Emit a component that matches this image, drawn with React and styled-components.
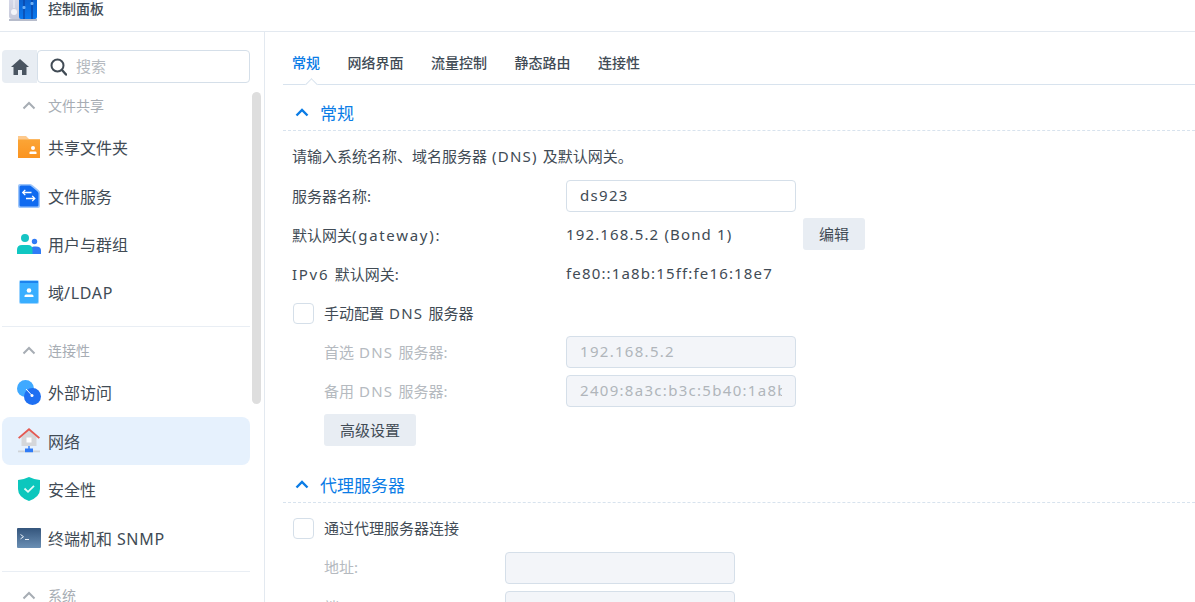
import React from "react";
import styled, { createGlobalStyle } from "styled-components";

const GlobalStyle = createGlobalStyle`
  html, body { margin: 0; padding: 0; background: #fff; }
  body {
    font-family: "Noto Sans", "Noto Sans CJK SC", sans-serif;
    color: #414b55;
  }
  * { box-sizing: border-box; }
`;

const Chevron = ({ color = "#a7adb4", width = 2 }) => (
  <svg width="14" height="9" viewBox="0 0 14 9">
    <path d="M1.500 7.500 7 2l5.500 5.500" fill="none" stroke={color} strokeWidth={width} />
  </svg>
);

const AppIcon = () => (
  <svg width="28" height="21" viewBox="0 0 28 21">
    <defs>
      <linearGradient id="appSteel" x1="0" y1="0" x2="0" y2="1">
        <stop offset="0" stopColor="#d9dcec" />
        <stop offset="1" stopColor="#c6c9da" />
      </linearGradient>
      <linearGradient id="appBlue" x1="0" y1="0" x2="0" y2="1">
        <stop offset="0" stopColor="#0c5cc8" />
        <stop offset="1" stopColor="#0a78ee" />
      </linearGradient>
    </defs>
    <rect x="0" y="-6" width="28" height="25" rx="3" fill="url(#appSteel)" />
    <rect x="10" y="-6" width="18" height="25" rx="2" fill="url(#appBlue)" />
    <rect x="0" y="19" width="28" height="2" fill="#b7bccb" />
    <circle cx="5" cy="12" r="3" fill="#f4f5f9" />
    <path d="M5 0v8" stroke="#eef0f7" strokeWidth="1.200" />
    <path d="M15 0v19M23 0v19" stroke="#0a3f9e" strokeWidth="1.200" />
    <rect x="13.500" y="6" width="3" height="3" rx="1" fill="#6fb0f5" />
    <rect x="21.500" y="2" width="3" height="3" rx="1" fill="#6fb0f5" />
  </svg>
);

const HomeIcon = () => (
  <svg width="18" height="16" viewBox="0 0 18 16">
    <path d="M9 0 0 8h2.500v8h4.500v-5h4v5h4.500V8H18z" fill="#4a5561" />
  </svg>
);

const SearchIcon = () => (
  <svg width="17" height="18" viewBox="0 0 17 18">
    <circle cx="7.500" cy="7.500" r="6" fill="none" stroke="#414b55" strokeWidth="2" />
    <path d="m12 12 4 4.500" stroke="#414b55" strokeWidth="2.400" strokeLinecap="round" />
  </svg>
);

const FolderIcon = () => (
  <svg width="24" height="22" viewBox="0 0 24 22">
    <defs>
      <linearGradient id="folderFill" x1="0" y1="0" x2="0" y2="1">
        <stop offset="0" stopColor="#fba536" />
        <stop offset="1" stopColor="#fb9420" />
      </linearGradient>
    </defs>
    <path d="M1 0h8l3 3h11v5H1z" fill="#fdc98c" />
    <path d="M1 3.500h22V22H1z" fill="url(#folderFill)" />
    <circle cx="16" cy="12" r="2" fill="#fff" />
    <path d="M12.500 18v-1.500q0-1 1-1h5q1 0 1 1V18z" fill="#fff" />
  </svg>
);

const FileServiceIcon = () => (
  <svg width="22" height="24" viewBox="0 0 22 24">
    <path d="M2 0h10q1.500 0 3 1.500l5.500 4.500q1.500 1 1.500 3v13q0 2-2 2H2q-2 0-2-2V2q0-2 2-2z" fill="#9cc5fb" />
    <path d="M3 1.500h8.500q1 0 2 1l5.500 4.500q1.500 1 1.500 2.500V21q0 1.500-1.500 1.500H3Q1.500 22.500 1.500 21V3Q1.500 1.500 3 1.500z" fill="#0f6af0" />
    <path d="M13.500 8.500h-9m2.800-2.600L4.700 8.500l2.600 2.600M8 14.500h9m-2.800-2.600 2.600 2.600-2.600 2.600" fill="none" stroke="#fff" strokeWidth="1.300" />
  </svg>
);

const UsersIcon = () => (
  <svg width="24" height="20" viewBox="0 0 24 20">
    <path d="M14 20v-3.500q0-4 3-4h2q5 0 5 4V20z" fill="#2f7bf6" />
    <circle cx="17.500" cy="7.500" r="2.700" fill="#2f7bf6" />
    <circle cx="8" cy="4" r="4" fill="#16c4c4" />
    <path d="M0 20v-4q0-5 5-5h6q4.500 0 4.500 5v4z" fill="#10c7c2" />
  </svg>
);

const DomainIcon = () => (
  <svg width="20" height="24" viewBox="0 0 20 24">
    <rect width="20" height="24" rx="2" fill="#9cd4ff" />
    <path d="M1 3h18v19q0 1-1 1H2q-1 0-1-1z" fill="#39aeff" />
    <path d="M1 1h18v2H1z" fill="#1c83ee" />
    <circle cx="10" cy="10.500" r="2.300" fill="#fff" />
    <path d="M5.500 17v-1q0-1.500 1.500-1.500h6q1.500 0 1.500 1.500v1z" fill="#fff" />
  </svg>
);

const ExternalIcon = () => (
  <svg width="24" height="25" viewBox="0 0 24 25">
    <circle cx="8.500" cy="8.500" r="8.500" fill="#3fa9ff" />
    <circle cx="15.500" cy="16.500" r="8.500" fill="#1e6ff2" />
    <path d="m9 9 6.500 7" stroke="#fff" strokeWidth="1" />
    <circle cx="15" cy="15.500" r="1.500" fill="#fff" />
  </svg>
);

const NetworkIcon = () => (
  <svg width="22" height="25" viewBox="0 0 22 25">
    <path d="M11 2 3.500 9v9h15V9z" fill="#d5d7da" />
    <path d="M0 9.500 11 0l11 9.500-1.300 1.300L11 2.500 1.300 10.800z" fill="#e45a52" />
    <rect x="8.500" y="9.500" width="5" height="5" fill="#fff" />
    <path d="M0 22.500h22v1.800H0z" fill="#cfd3d8" />
    <path d="M10.300 18h1.400v2.500H15v3.800H7v-3.800h3.300z" fill="#2f7bf6" />
  </svg>
);

const ShieldIcon = () => (
  <svg width="22" height="24" viewBox="0 0 22 24">
    <path d="M11 0q5 2.500 11 3v9q0 8-11 12Q0 20 0 12V3q6-.5 11-3z" fill="#0cc7bd" />
    <path d="m6.500 11.500 3.500 3.300 6-6" fill="none" stroke="#e4fbf8" strokeWidth="1.800" />
  </svg>
);

const TerminalIcon = () => (
  <svg width="24" height="20" viewBox="0 0 24 20">
    <defs>
      <linearGradient id="termBg" x1="0" y1="0" x2="0" y2="1">
        <stop offset="0" stopColor="#34557c" />
        <stop offset="1" stopColor="#6a8fb4" />
      </linearGradient>
    </defs>
    <rect width="24" height="20" rx="1" fill="url(#termBg)" />
    <path d="m3.500 6.500 3 2.200-3 2.200M8 11.500h4" fill="none" stroke="#e8eef5" strokeWidth="1" />
  </svg>
);

const Latin = styled.span`
  letter-spacing: ${(p) => p.$spacing || "1.200px"};
`;

const sideGroups = [
  {
    title: "文件共享",
    items: [
      { label: "共享文件夹", icon: <FolderIcon /> },
      { label: "文件服务", icon: <FileServiceIcon /> },
      { label: "用户与群组", icon: <UsersIcon /> },
      { label: <>域<Latin $spacing="0.700px">/LDAP</Latin></>, icon: <DomainIcon /> },
    ],
  },
  {
    title: "连接性",
    items: [
      { label: "外部访问", icon: <ExternalIcon /> },
      { label: "网络", icon: <NetworkIcon />, active: true },
      { label: "安全性", icon: <ShieldIcon /> },
      { label: <>终端机和<Latin $spacing="0.700px"> SNMP</Latin></>, icon: <TerminalIcon /> },
    ],
  },
  { title: "系统", items: [] },
];

const tabs = ["常规", "网络界面", "流量控制", "静态路由", "连接性"];

export default function App() {
  return (
    <Page>
      <GlobalStyle />
      <TitleBar>
        <AppIcon />
        <AppTitle>控制面板</AppTitle>
      </TitleBar>
      <Body>
        <Sidebar>
          <SearchRow>
            <HomeButton>
              <HomeIcon />
            </HomeButton>
            <SearchBox>
              <SearchIcon />
              <SearchHint>搜索</SearchHint>
            </SearchBox>
          </SearchRow>
          <SideScroll>
            <SideList>
              {sideGroups.map((group) => (
                <SideGroup key={group.title}>
                  <GroupHead>
                    <Chevron />
                    <GroupTitle>{group.title}</GroupTitle>
                  </GroupHead>
                  {group.items.map((item, i) => (
                    <SideItem key={i} $active={item.active}>
                      <SideIcon>{item.icon}</SideIcon>
                      <SideLabel>{item.label}</SideLabel>
                    </SideItem>
                  ))}
                </SideGroup>
              ))}
            </SideList>
            <ScrollThumb />
          </SideScroll>
        </Sidebar>
        <Main>
          <TabBar>
            {tabs.map((tab, i) => (
              <Tab key={tab} $active={i === 0}>
                {tab}
              </Tab>
            ))}
            <TabNotch />
          </TabBar>

          <SectionHead>
            <Chevron color="#0a7ce6" width={2.4} />
            <SectionTitle>常规</SectionTitle>
          </SectionHead>
          <Description>请输入系统名称、域名服务器<Latin> (DNS) </Latin>及默认网关。</Description>
          <Form>
            <Row>
              <Label>服务器名称:</Label>
              <Input>
                <InputText>ds923</InputText>
              </Input>
            </Row>
            <Row>
              <Label>默认网关<Latin $spacing="1.700px">(gateway):</Latin></Label>
              <Value>192.168.5.2 (Bond 1)</Value>
              <EditButton>编辑</EditButton>
            </Row>
            <Row>
              <Label><Latin $spacing="1.700px">IPv6 </Latin>默认网关:</Label>
              <Value>fe80::1a8b:15ff:fe16:18e7</Value>
            </Row>
            <Row>
              <CheckBox />
              <CheckLabel>手动配置<Latin> DNS </Latin>服务器</CheckLabel>
            </Row>
            <Row $indent>
              <Label $indent $muted>首选<Latin> DNS </Latin>服务器:</Label>
              <Input $disabled>
                <InputText>192.168.5.2</InputText>
              </Input>
            </Row>
            <Row $indent>
              <Label $indent $muted>备用<Latin> DNS </Latin>服务器:</Label>
              <Input $disabled>
                <InputText>2409:8a3c:b3c:5b40:1a8b:15ff:fe16:18e7</InputText>
              </Input>
            </Row>
            <Row $indent>
              <WideButton>高级设置</WideButton>
            </Row>
          </Form>

          <SectionHead $second>
            <Chevron color="#0a7ce6" width={2.4} />
            <SectionTitle>代理服务器</SectionTitle>
          </SectionHead>
          <ProxyForm>
            <Row>
              <CheckBox />
              <CheckLabel>通过代理服务器连接</CheckLabel>
            </Row>
            <Row $indent>
              <Label $proxy $muted>地址:</Label>
              <Input $disabled />
            </Row>
            <Row $indent>
              <Label $proxy $muted>端口:</Label>
              <Input $disabled />
            </Row>
          </ProxyForm>
        </Main>
      </Body>
    </Page>
  );
}

const Page = styled.div`
  width: 1195px;
  height: 602px;
  overflow: hidden;
  display: flex;
  flex-direction: column;
  background: #fff;
`;

const TitleBar = styled.header`
  height: 32px;
  flex: none;
  display: flex;
  align-items: flex-start;
  gap: 11px;
  padding-left: 9px;
  border-bottom: 1px solid #e3e9f0;
`;

const AppTitle = styled.div`
  font-size: 14px;
  line-height: 18px;
  font-weight: 500;
`;

const Body = styled.div`
  flex: 1;
  display: flex;
  min-height: 0;
`;

const Sidebar = styled.aside`
  width: 265px;
  flex: none;
  border-right: 1px solid #e3e9f0;
  display: flex;
  flex-direction: column;
  overflow: hidden;
`;

const SearchRow = styled.div`
  display: flex;
  height: 33px;
  margin: 18px 0 0 2px;
  width: 248px;
  flex: none;
`;

const HomeButton = styled.div`
  width: 35px;
  display: flex;
  align-items: center;
  justify-content: center;
  background: #e8edf3;
  border-radius: 4px 0 0 4px;
`;

const SearchBox = styled.div`
  flex: 1;
  display: flex;
  align-items: center;
  gap: 9px;
  padding-left: 12px;
  border: 1px solid #d5dfe9;
  border-radius: 4px;
`;

const SearchHint = styled.span`
  font-size: 15px;
  line-height: 20px;
  padding-bottom: 2px;
  color: #b5bac0;
`;

const SideScroll = styled.div`
  flex: 1;
  display: flex;
  min-height: 0;
  margin-top: 7px;
`;

const SideList = styled.div`
  width: 250px;
  flex: none;
  padding-left: 2px;
`;

const SideGroup = styled.div`
  padding-bottom: 9.400px;
  border-bottom: 1px solid #e9eef4;
  & + & {
    padding-top: 8.200px;
  }
`;

const GroupHead = styled.div`
  height: 30px;
  display: flex;
  align-items: center;
  gap: 12px;
  padding-left: 20px;
  margin-bottom: 3px;
`;

const GroupTitle = styled.span`
  font-size: 14px;
  color: #a7adb4;
`;

const SideItem = styled.div`
  height: 48.400px;
  display: flex;
  align-items: center;
  font-size: 16px;
  border-radius: 8px;
  background: ${(p) => (p.$active ? "#e6f1fd" : "transparent")};
`;

const SideIcon = styled.span`
  width: 46px;
  flex: none;
  display: flex;
  justify-content: center;
  padding-left: 8px;
`;

const SideLabel = styled.span`
  white-space: nowrap;
`;

const ScrollThumb = styled.div`
  width: 9px;
  height: 312px;
  margin: 2px 0 0 2px;
  background: #dedede;
  border-radius: 5px;
`;

const Main = styled.main`
  flex: 1;
  min-width: 0;
  padding-left: 18px;
  overflow: hidden;
`;

const TabBar = styled.nav`
  position: relative;
  display: flex;
  gap: 27.500px;
  height: 53px;
  padding: 22px 0 0 9px;
  border-bottom: 1px solid #d8e3ee;
`;

const Tab = styled.div`
  font-size: 14px;
  line-height: 18px;
  font-weight: 500;
  color: ${(p) => (p.$active ? "#0a7ce6" : "#414b55")};
`;

const TabNotch = styled.span`
  position: absolute;
  left: 24px;
  bottom: -5px;
  width: 9px;
  height: 9px;
  background: #fff;
  border-left: 1px solid #d8e3ee;
  border-top: 1px solid #d8e3ee;
  transform: rotate(45deg);
`;

const SectionHead = styled.div`
  height: 46px;
  display: flex;
  align-items: center;
  gap: 11px;
  padding: 10px 0 0 12px;
  border-bottom: 1px dashed #d8e3ee;
  margin-top: ${(p) => (p.$second ? "11px" : "0")};
`;

const SectionTitle = styled.div`
  font-size: 17px;
  color: #0a7ce6;
`;

const Description = styled.div`
  font-size: 15px;
  line-height: 20px;
  margin: 15px 0 0 9px;
`;

const Form = styled.div`
  display: flex;
  flex-direction: column;
  gap: 7px;
  margin: 14px 0 0 9px;
`;

const ProxyForm = styled(Form)`
  margin-top: 9px;
  gap: 7.600px;
`;

const Row = styled.div`
  height: 32px;
  display: flex;
  align-items: center;
  font-size: 15px;
  padding-left: ${(p) => (p.$indent ? "32px" : "0")};
`;

const Label = styled.div`
  flex: none;
  padding-bottom: 2px;
  width: ${(p) => (p.$proxy ? "181px" : p.$indent ? "242px" : "274px")};
  color: ${(p) => (p.$muted ? "#b5bac0" : "#414b55")};
`;

const Value = styled.div`
  letter-spacing: 1.150px;
  width: 237px;
  flex: none;
  padding-bottom: 2px;
  white-space: nowrap;
`;

const Input = styled.div`
  width: 230px;
  height: 32px;
  flex: none;
  padding: 0 13px;
  line-height: 28px;
  letter-spacing: 1.300px;
  border: 1px solid #d5dfe9;
  border-radius: 4px;
  background: ${(p) => (p.$disabled ? "#f3f5f9" : "#fff")};
  color: ${(p) => (p.$disabled ? "#b0b5bb" : "#414b55")};
`;

const InputText = styled.div`
  white-space: nowrap;
  overflow: hidden;
`;

const EditButton = styled.div`
  width: 62px;
  height: 32px;
  margin-bottom: 2px;
  padding-bottom: 2px;
  border-radius: 3px;
  background: #e8edf3;
  display: flex;
  align-items: center;
  justify-content: center;
`;

const WideButton = styled(EditButton)`
  width: 92px;
  margin-bottom: 0;
`;

const CheckBox = styled.span`
  width: 21px;
  height: 21px;
  flex: none;
  margin-left: 1px;
  border: 1px solid #d5dfe9;
  border-radius: 4px;
`;

const CheckLabel = styled.span`
  margin-left: 10px;
  padding-bottom: 2px;
`;
